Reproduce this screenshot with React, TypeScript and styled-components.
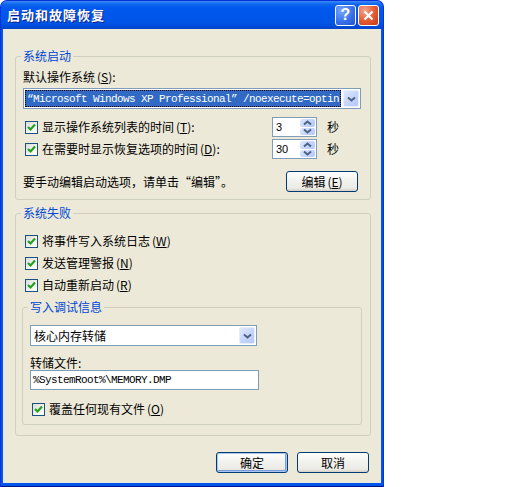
import React from 'react';
import styled, { createGlobalStyle, css } from 'styled-components';

const GlobalStyle = createGlobalStyle`
  html, body {
    margin: 0;
    padding: 0;
    background: #ffffff;
  }
  body {
    font-family: "Noto Sans CJK SC", "Liberation Sans", sans-serif;
    font-size: 12px;
    line-height: 14px;
    color: #000000;
  }
`;

const Window = styled.div`
  width: 384px;
  height: 487px;
  box-sizing: border-box;
  display: flex;
  flex-direction: column;
  background: #0055ea;
  border: 1px solid #0831d9;
  border-bottom-color: #00138c;
  border-radius: 7px 7px 0 0;
  overflow: hidden;
`;

const TitleBar = styled.div`
  height: 28px;
  flex: none;
  display: flex;
  align-items: center;
  padding: 0 4px 0 6px;
  background: linear-gradient(
    to bottom,
    #3d8df6 0px,
    #0f67ec 3px,
    #0058ee 7px,
    #0055e6 22px,
    #0149d8 26px,
    #0043c4 28px
  );
`;

const Title = styled.div`
  flex: 1;
  color: #ffffff;
  font-weight: bold;
  font-size: 13px;
  letter-spacing: 1px;
  text-shadow: 1px 1px 0 #0a1f8a;
`;

const CaptionButton = styled.div<{ $kind: 'help' | 'close' }>`
  width: 21px;
  height: 21px;
  box-sizing: border-box;
  margin-left: 2px;
  border: 1px solid #ffffff;
  border-radius: 3px;
  display: flex;
  align-items: center;
  justify-content: center;
  color: #ffffff;
  font-family: "Liberation Sans", sans-serif;
  font-weight: bold;
  font-size: 16px;
  ${({ $kind }) =>
    $kind === 'help'
      ? css`
          background: radial-gradient(circle at 30% 25%, #7aa6fb 0%, #3a72ea 55%, #1f52cf 100%);
        `
      : css`
          background: radial-gradient(circle at 30% 25%, #f3a58c 0%, #e2582f 55%, #c43a18 100%);
        `}
`;

const Frame = styled.div`
  flex: 1;
  display: flex;
  padding: 0 2px 3px;
`;

const Client = styled.div`
  flex: 1;
  display: flex;
  flex-direction: column;
  background: #ece9d8;
  padding: 20px 10px 0 12px;
`;

const Group = styled.fieldset<{ $inner?: boolean; $pt: number; $pb: number }>`
  margin: 0;
  min-inline-size: 0;
  border: 1px solid #d0d0bf;
  border-radius: 3px;
  padding: ${({ $pt, $pb }) => `${$pt}px 9px ${$pb}px 7px`};
  ${({ $inner }) =>
    $inner &&
    css`
      margin: 8px -1px 0 -1px;
    `}
  & + & {
    margin-top: 6px;
  }
`;

const Legend = styled.legend`
  padding: 0 2px;
  margin-left: -2px;
  color: #0046d5;
  line-height: 14px;
`;

const FieldLabel = styled.div<{ $mt?: number }>`
  margin-top: ${({ $mt }) => $mt ?? 0}px;
  line-height: 14px;
`;

const Combo = styled.div<{ $width?: number; $mt?: number }>`
  width: ${({ $width }) => ($width ? `${$width}px` : 'auto')};
  margin-top: ${({ $mt }) => $mt ?? 0}px;
  height: 21px;
  box-sizing: border-box;
  border: 1px solid #7f9db9;
  background: #ffffff;
  display: flex;
  align-items: stretch;
  padding: 1px;
  gap: 2px;
`;

const monoText = css`
  font-family: "Liberation Mono", "Noto Sans CJK SC", monospace;
  font-size: 11px;
  letter-spacing: -0.6px;
`;

const ComboValue = styled.div<{ $selected?: boolean; $mono?: boolean }>`
  flex: 1;
  min-width: 0;
  overflow: hidden;
  white-space: nowrap;
  display: flex;
  align-items: center;
  padding-left: 2px;
  ${({ $mono }) => $mono && monoText}
  ${({ $selected }) =>
    $selected &&
    css`
      background: #316ac5;
      color: #ffffff;
      outline: 1px dotted #000000;
      outline-offset: -1px;
    `}
`;

const DropButton = styled.div`
  width: 16px;
  flex: none;
  box-sizing: border-box;
  border: 1px solid #e6eefc;
  border-radius: 2px;
  background: linear-gradient(135deg, #dfe8fe 0%, #c2d3fc 60%, #b4c8f6 100%);
  display: flex;
  align-items: center;
  justify-content: center;
`;

const Chevron = ({ up }: { up?: boolean }) => (
  <svg width="9" height="6" viewBox="0 0 9 6">
    <path
      d={up ? 'M1 4.5 L4.5 1.5 L8 4.5' : 'M1 1.5 L4.5 4.5 L8 1.5'}
      fill="none"
      stroke="#4d6185"
      strokeWidth="2"
    />
  </svg>
);

const OptionRow = styled.div<{ $mt: number }>`
  margin-top: ${({ $mt }) => $mt}px;
  height: 20px;
  display: flex;
  align-items: center;
`;

const CheckRow = styled.label<{ $mt: number }>`
  margin-top: ${({ $mt }) => $mt}px;
  height: 14px;
  display: flex;
  align-items: center;
  gap: 4px;
  padding-left: 2px;
  flex: 1;
`;

const Box = styled.span`
  width: 13px;
  height: 13px;
  flex: none;
  box-sizing: border-box;
  border: 1px solid #1c5180;
  background: linear-gradient(135deg, #dcdcd7 0%, #f4f4f0 60%, #ffffff 100%);
  display: flex;
  align-items: center;
  justify-content: center;
`;

const Check = () => (
  <Box>
    <svg width="11" height="11" viewBox="0 0 11 11">
      <path d="M2 5 L4.5 7.5 L9 2.5" fill="none" stroke="#21a121" strokeWidth="2.2" />
    </svg>
  </Box>
);

const Spin = styled.div`
  width: 45px;
  height: 20px;
  box-sizing: border-box;
  border: 1px solid #7f9db9;
  background: #ffffff;
  display: flex;
  padding: 1px;
  font-family: "Liberation Sans", sans-serif;
  font-size: 11px;
`;

const SpinValue = styled.div`
  flex: 1;
  display: flex;
  align-items: center;
  padding-left: 2px;
`;

const SpinButtons = styled.div`
  width: 15px;
  display: flex;
  flex-direction: column;
  gap: 1px;
`;

const SpinHalf = styled.div`
  flex: 1;
  border-radius: 2px;
  background: linear-gradient(135deg, #dfe8fe 0%, #c2d3fc 60%, #b4c8f6 100%);
  display: flex;
  align-items: center;
  justify-content: center;
`;

const Unit = styled.span`
  margin: 0 22px 0 10px;
`;

const ActionRow = styled.div`
  margin-top: 12px;
  display: flex;
  align-items: center;
  justify-content: space-between;
`;

const Button = styled.button<{ $default?: boolean }>`
  width: 72px;
  height: 21px;
  padding: 0;
  font: inherit;
  color: #000000;
  border: 1px solid #003c74;
  border-radius: 3px;
  background: linear-gradient(to bottom, #ffffff 0%, #f3f3ef 40%, #ecebe6 85%, #d6d0c5 100%);
  ${({ $default }) =>
    $default &&
    css`
      box-shadow: inset 0 0 0 1px #a9c5f0, inset -1px -1px 0 1px #7b9eda;
    `}
`;

const TextInput = styled.div`
  width: 229px;
  height: 20px;
  box-sizing: border-box;
  border: 1px solid #7f9db9;
  background: #ffffff;
  display: flex;
  align-items: center;
  padding-left: 2px;
  ${monoText}
`;

const Footer = styled.div`
  margin-top: 16px;
  padding-right: 2px;
  display: flex;
  justify-content: flex-end;
  gap: 9px;
`;

const KeyText = styled.span`
  margin-left: 2px;
`;

const Key = ({ k }: { k: string }) => (
  <KeyText>
    (<u>{k}</u>)
  </KeyText>
);

const CheckOption = ({ text, k, suffix = '', mt = 0 }: { text: string; k: string; suffix?: string; mt?: number }) => (
  <CheckRow $mt={mt}>
    <Check />
    <span>
      {text}
      <Key k={k} />
      {suffix}
    </span>
  </CheckRow>
);

export default function App() {
  return (
    <>
      <GlobalStyle />
      <Window>
        <TitleBar>
          <Title>启动和故障恢复</Title>
          <CaptionButton $kind="help">?</CaptionButton>
          <CaptionButton $kind="close">
            <svg width="11" height="11" viewBox="0 0 11 11">
              <path d="M1.5 1.5 L9.5 9.5 M9.5 1.5 L1.5 9.5" stroke="#ffffff" strokeWidth="2.2" />
            </svg>
          </CaptionButton>
        </TitleBar>
        <Frame>
          <Client>
            <Group $pt={7} $pb={7}>
              <Legend>系统启动</Legend>
              <FieldLabel>
                默认操作系统<Key k="S" />:
              </FieldLabel>
              <Combo $mt={4}>
                <ComboValue $selected $mono>
                  “Microsoft Windows XP Professional” /noexecute=optin
                </ComboValue>
                <DropButton>
                  <Chevron />
                </DropButton>
              </Combo>
              <OptionRow $mt={8}>
                <CheckOption text="显示操作系统列表的时间" k="T" suffix=":" />
                <Spin>
                  <SpinValue>3</SpinValue>
                  <SpinButtons>
                    <SpinHalf>
                      <Chevron up />
                    </SpinHalf>
                    <SpinHalf>
                      <Chevron />
                    </SpinHalf>
                  </SpinButtons>
                </Spin>
                <Unit>秒</Unit>
              </OptionRow>
              <OptionRow $mt={2}>
                <CheckOption text="在需要时显示恢复选项的时间" k="D" suffix=":" />
                <Spin>
                  <SpinValue>30</SpinValue>
                  <SpinButtons>
                    <SpinHalf>
                      <Chevron up />
                    </SpinHalf>
                    <SpinHalf>
                      <Chevron />
                    </SpinHalf>
                  </SpinButtons>
                </Spin>
                <Unit>秒</Unit>
              </OptionRow>
              <ActionRow>
                <span>要手动编辑启动选项，请单击“编辑”。</span>
                <Button style={{ marginRight: 3 }}>
                  编辑<Key k="E" />
                </Button>
              </ActionRow>
            </Group>
            <Group $pt={14} $pb={10}>
              <Legend>系统失败</Legend>
              <CheckOption text="将事件写入系统日志" k="W" />
              <CheckOption text="发送管理警报" k="N" mt={8} />
              <CheckOption text="自动重新启动" k="R" mt={8} />
              <Group $inner $pt={11} $pb={8}>
                <Legend>写入调试信息</Legend>
                <Combo $width={227}>
                  <ComboValue>核心内存转储</ComboValue>
                  <DropButton>
                    <Chevron />
                  </DropButton>
                </Combo>
                <FieldLabel $mt={10}>转储文件:</FieldLabel>
                <TextInput>%SystemRoot%\MEMORY.DMP</TextInput>
                <CheckOption text="覆盖任何现有文件" k="O" mt={12} />
              </Group>
            </Group>
            <Footer>
              <Button $default>确定</Button>
              <Button>取消</Button>
            </Footer>
          </Client>
        </Frame>
      </Window>
    </>
  );
}
